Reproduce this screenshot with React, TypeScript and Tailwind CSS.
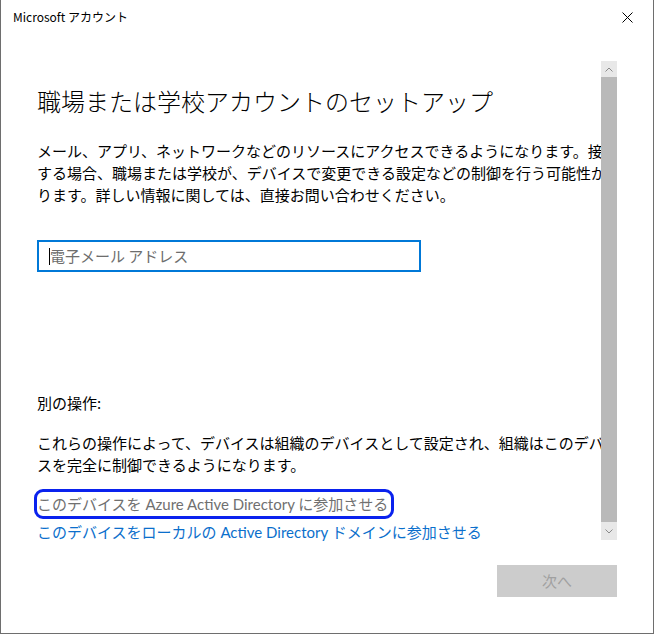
import React from "react";

const font = { fontFamily: '"Noto Sans CJK JP", "Noto Sans", sans-serif' };
const linkFont = { fontFamily: 'Lato, "Noto Sans CJK JP", sans-serif' };

export default function App() {
  return (
    <div
      className="relative w-[654px] h-[634px] bg-white border-x border-b border-[#6e6e6e] box-border overflow-hidden text-black"
      style={font}
    >
      {/* Title bar */}
      <div className="h-[61px] flex items-start justify-between pl-[12px] pr-[20px] pt-[9px]">
        <span className="text-[12px] leading-[16px] text-black">Microsoft アカウント</span>
        <svg width="11" height="11" viewBox="0 0 11 11" className="mt-[3px]">
          <path d="M0.5 0.5 L10.5 10.5 M10.5 0.5 L0.5 10.5" stroke="#000" strokeWidth="1" />
        </svg>
      </div>

      {/* Scroll viewport */}
      <div className="w-[616px] overflow-hidden">
        <div className="w-[660px] pl-[36px] pt-[24px]">
          <h1 className="text-[24px] leading-[32px] font-light whitespace-nowrap">
            職場または学校アカウントのセットアップ
          </h1>
          <p className="mt-[23px] w-[590px] text-[15px] leading-[22px]">
            メール、アプリ、ネットワークなどのリソースにアクセスできるようになります。接続する場合、職場または学校が、デバイスで変更できる設定などの制御を行う可能性があります。詳しい情報に関しては、直接お問い合わせください。
          </p>
          <div className="mt-[34px] w-[384px] h-[32px] border-2 border-[#0078d7] flex items-center pl-[10px] box-border">
            <span className="w-px h-[17px] bg-black" />
            <span className="text-[15px] leading-[22px] text-[#6d6d6d]">電子メール アドレス</span>
          </div>
          <p className="mt-[120px] text-[15px] leading-[22px]">別の操作:</p>
          <p className="mt-[18px] w-[590px] text-[15px] leading-[22px]">
            これらの操作によって、デバイスは組織のデバイスとして設定され、組織はこのデバイスを完全に制御できるようになります。
          </p>
          <div className="mt-[13px] -ml-[3px] inline-flex h-[30px] items-center border-[3px] border-[#0a22ee] rounded-[9px] pr-[3px] box-border">
            <span className="text-[15px] leading-[24px] text-[#707070] whitespace-nowrap" style={linkFont}>
              このデバイスを Azure Active Directory に参加させる
            </span>
          </div>
          <p className="mt-[2px] text-[15px] leading-[22px] text-[#0b6fcc] whitespace-nowrap" style={linkFont}>
            このデバイスをローカルの Active Directory ドメインに参加させる
          </p>
        </div>
      </div>

      {/* Footer */}
      <div className="mt-[22px] flex justify-end pr-[36px]">
        <div className="w-[120px] h-[32px] bg-[#cccccc] flex items-center justify-center text-[15px] text-[#a0a0a0]">
          次へ
        </div>
      </div>

      {/* Scrollbar overlay */}
      <div className="absolute left-[600px] top-[61px] w-[16px] h-[479px] flex flex-col">
        <div className="h-[16px] bg-[#e8e8e8] flex items-center justify-center">
          <svg width="8" height="5" viewBox="0 0 8 5">
            <path d="M0.5 4.5 L4 1 L7.5 4.5" stroke="#8a8a8a" strokeWidth="1" fill="none" />
          </svg>
        </div>
        <div className="flex-1 bg-[#b9b9b9]" />
        <div className="h-[18px] bg-[#e8e8e8] flex items-center justify-center">
          <svg width="8" height="5" viewBox="0 0 8 5">
            <path d="M0.5 0.5 L4 4 L7.5 0.5" stroke="#8a8a8a" strokeWidth="1" fill="none" />
          </svg>
        </div>
      </div>
    </div>
  );
}
